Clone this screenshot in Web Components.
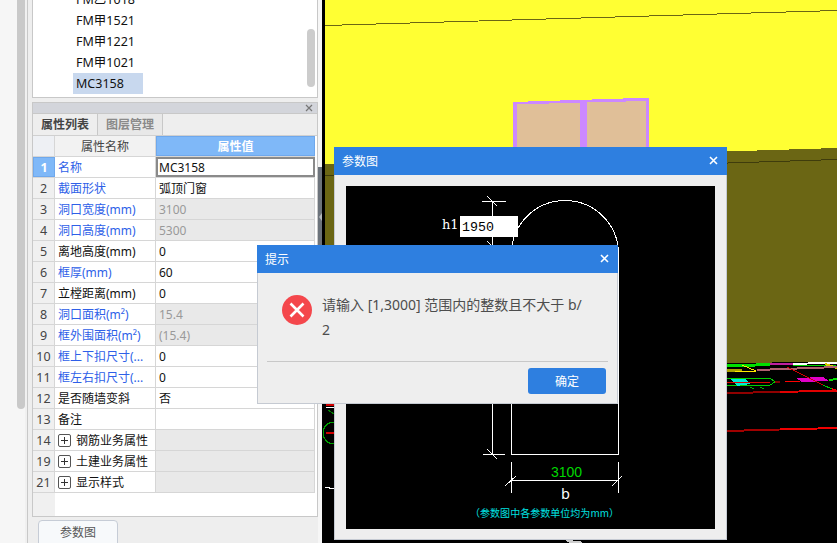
<!DOCTYPE html>
<html lang="zh">
<head>
<meta charset="utf-8">
<title>参数图</title>
<style>
  html, body { margin: 0; height: 100%; overflow: hidden; }
  body { font-family: "Noto Sans", "Noto Sans CJK SC", sans-serif; font-size: 12px; }
</style>
</head>
<body>
<app-shell>
  <side-bar slot="side">
    <type-list></type-list>
    <prop-panel></prop-panel>
  </side-bar>
  <scene-view slot="scene"></scene-view>
  <app-dialog title="参数图" style="left:334px;top:147px;width:393px;height:393px">
    <param-drawing></param-drawing>
  </app-dialog>
  <app-dialog title="提示" style="left:257px;top:245px;width:361px;height:159px">
    <tip-body></tip-body>
  </app-dialog>
</app-shell>

<script>
/**
 * Page frame: the sidebar, the scene and the floating windows.
 */
customElements.define('app-shell', class extends HTMLElement {
  constructor () {
    super()
    this.attachShadow({ mode: 'open' }).innerHTML = `
      <style>
        :host { display: flex; position: relative; width: 837px; height: 543px; overflow: hidden; background: #000; }
        .side { flex: 0 0 318px; }
        .scene { flex: 1; }
      </style>
      <div class="side"><slot name="side"></slot></div>
      <div class="scene"><slot name="scene"></slot></div>
      <slot></slot>
    `
  }
})

/**
 * Left column with the scrollbar strip and the two panels.
 */
customElements.define('side-bar', class extends HTMLElement {
  constructor () {
    super()
    this.attachShadow({ mode: 'open' }).innerHTML = `
      <style>
        :host { display: flex; height: 543px; background: #f6f6f6; }
        .track { flex: 0 0 17px; }
        .thumb { flex: 0 0 8px; height: 409px; background: #c9c9c9; border-radius: 0 0 4px 4px; }
        .gap { flex: 0 0 2px; background: #f0f0f0; }
        .main { flex: 1; display: flex; flex-direction: column; gap: 4px; padding-left: 4px; background: #eeeeee; border-left: 1px solid #c8c8c8; overflow: hidden; }
      </style>
      <div class="track"></div>
      <div class="thumb"></div>
      <div class="gap"></div>
      <div class="main"><slot></slot></div>
    `
  }
})

/**
 * The list of door types above the property table.
 */
customElements.define('type-list', class extends HTMLElement {
  constructor () {
    super()
    const items = ['FM乙1018', 'FM甲1521', 'FM甲1221', 'FM甲1021', 'MC3158']
    this.attachShadow({ mode: 'open' }).innerHTML = `
      <style>
        :host { display: block; flex: none; position: relative; height: 98px; box-sizing: border-box; background: #fff; border: 1px solid #c8c8c8; border-top: 0; overflow: hidden; color: #111; }
        ul { list-style: none; margin: -11px 0 0; padding: 0 0 0 40px; }
        li { width: 70px; height: 21px; line-height: 21px; padding-left: 3px; box-sizing: border-box; font-size: 12.5px; }
        li.sel { background: #c8d8ee; }
        .bar { position: absolute; right: 2px; top: 29px; width: 8px; height: 58px; border-radius: 4px; background: #cccccc; }
      </style>
      <ul>${items.map(t => `<li class="${t === 'MC3158' ? 'sel' : ''}">${t}</li>`).join('')}</ul>
      <div class="bar"></div>
    `
  }
})

/**
 * Property table with its tabs and the button below it.
 */
customElements.define('prop-panel', class extends HTMLElement {
  constructor () {
    super()
    const rows = [
      ['1', '名称', 'MC3158', 'blue', 'edit'],
      ['2', '截面形状', '弧顶门窗', 'blue', ''],
      ['3', '洞口宽度(mm)', '3100', 'blue', 'off'],
      ['4', '洞口高度(mm)', '5300', 'blue', 'off'],
      ['5', '离地高度(mm)', '0', '', ''],
      ['6', '框厚(mm)', '60', 'blue', ''],
      ['7', '立樘距离(mm)', '0', '', ''],
      ['8', '洞口面积(m²)', '15.4', 'blue', 'off'],
      ['9', '框外围面积(m²)', '(15.4)', 'blue', 'off'],
      ['10', '框上下扣尺寸(...', '0', 'blue', ''],
      ['11', '框左右扣尺寸(...', '0', 'blue', ''],
      ['12', '是否随墙变斜', '否', '', ''],
      ['13', '备注', '', '', ''],
      ['14', '钢筋业务属性', '', 'group', 'off'],
      ['19', '土建业务属性', '', 'group', 'off'],
      ['21', '显示样式', '', 'group', 'off']
    ]
    const rowHtml = rows.map(([n, name, value, kind, state], i) => `
      <div class="row">
        <div class="num ${i === 0 ? 'cur' : ''}">${n}</div>
        <div class="name ${kind === 'blue' ? 'link' : ''}">${kind === 'group' ? '<i class="plus"></i>' : ''}<span>${name}</span></div>
        <div class="val ${state}">${value}</div>
      </div>`).join('')
    this.attachShadow({ mode: 'open' }).innerHTML = `
      <style>
        :host { display: flex; flex-direction: column; flex: none; }
        .box { height: 415px; box-sizing: border-box; background: #fff; border: 1px solid #c8c8c8; display: flex; flex-direction: column; }
        .head { flex: 0 0 10px; background: #d3d5db; display: flex; justify-content: flex-end; align-items: center; padding-right: 4px; }
        .tabs { flex: 0 0 23px; display: flex; background: #eeeeee; border-top: 1px solid #c8c8c8; border-bottom: 1px solid #d0d0d0; box-sizing: border-box; }
        .tab { width: 64px; text-align: center; line-height: 21px; font-weight: 700; color: #444; border-right: 1px solid #c8c8c8; }
        .tab + .tab { color: #8a8a8a; background: #e8e8e8; }
        .grid { width: 282px; }
        .row, .top { display: grid; grid-template-columns: 22px 101px 159px; grid-template-rows: 20px; height: 21px; box-sizing: border-box; border-bottom: 1px solid #d6d6d6; line-height: 22px; }
        .row { color: #111; }
        .row > div, .top > div { overflow: hidden; }
        .num { background: #f0f0f0; text-align: center; border-right: 1px solid #d6d6d6; color: #444; font-size: 12.5px; }
        .num.cur { background: #7fb8f8; color: #fff; font-weight: 700; border: 1px solid #6fa8ec; line-height: 20px; box-sizing: border-box; }
        .name { padding: 2px 0 0 3px; box-sizing: border-box; border-right: 1px solid #d6d6d6; white-space: nowrap; display: flex; align-items: center; height: 20px; }
        .name.link { color: #2e5fe8; }
        .val { padding-left: 3px; border-right: 1px solid #d6d6d6; }
        .val.off { background: #e9e9e9; color: #999; }
        .val.edit { outline: 2px solid #8a8a8a; outline-offset: -2px; }
        .top { text-align: center; }
        .top div { background: #f2f2f2; color: #444; border-right: 1px solid #d6d6d6; }
        .top div:first-child { background: #eef0f4; }
        .top div:last-child { background: #7fb8f8; color: #fff; font-weight: 700; border: 1px solid #6fa8ec; line-height: 20px; box-sizing: border-box; }
        .plus { flex: 0 0 11px; height: 11px; margin: -2px 5px 0 0; border: 1px solid #555; border-radius: 2px; position: relative; }
        .plus::before, .plus::after { content: ''; position: absolute; background: #333; }
        .plus::before { left: 2px; right: 2px; top: 5px; height: 1px; }
        .plus::after { top: 2px; bottom: 2px; left: 5px; width: 1px; }
        .rest { flex: 1; width: 22px; background: #f0f0f0; }
        button { align-self: flex-start; margin: 3px 0 0 6px; width: 80px; height: 28px; background: #f7f9fb; border: 1px solid #c6ccd6; border-radius: 4px; font: inherit; color: #555; padding: 0 0 4px; }
      </style>
      <div class="box">
        <div class="head"><svg width="8" height="8" viewBox="0 0 8 8"><path d="M1 1 L7 7 M7 1 L1 7" stroke="#777" stroke-width="1.2"/></svg></div>
        <div class="tabs"><div class="tab">属性列表</div><div class="tab">图层管理</div></div>
        <div class="grid">
          <div class="top"><div></div><div>属性名称</div><div>属性值</div></div>
          ${rowHtml}
        </div>
        <div class="rest"></div>
      </div>
      <button type="button">参数图</button>
    `
  }
})

/**
 * The 3D view behind the windows, with the splitter on its left side.
 * Its shapes sit on a free canvas, the coordinates are those of the page.
 */
customElements.define('scene-view', class extends HTMLElement {
  constructor () {
    super()
    this.attachShadow({ mode: 'open' }).innerHTML = `
      <style>
        :host { display: flex; height: 543px; background: #000; }
        .split { flex: 0 0 4px; background: linear-gradient(#f6f6f6 167px, #6c737b 167px, #6c737b 300px, #f6f6f6 300px); position: relative; }
        .split::after { content: ''; position: absolute; left: 1px; top: 213px; border: 4px solid transparent; border-left: 0; border-right: 3px solid #b4b8bd; }
        svg { display: block; flex: none; }
      </style>
      <div class="split"></div>
      <svg width="515" height="543" viewBox="322 0 515 543" shape-rendering="crispEdges" fill="none">
        <polygon points="325,0 837,0 837,148 325,164" fill="#ffff33"/>
        <polygon points="325,164 837,148 837,362 325,366" fill="#6b6614"/>
        <path d="M325 25.5 L837 10.5" stroke="#6b6614"/>
        <path d="M325 176 L837 159.5" stroke="#3f3c0c"/>

        <polygon points="512.5,102 649,97.7 649,150 512.5,150" fill="#cc88ff"/>
        <polygon points="517,104 580,103 580,150 517,150" fill="#e0bf98"/>
        <polygon points="587,102.5 646,101 646,150 587,150" fill="#e0bf98"/>

        <path d="M727 366 L770 364.5" stroke="#00e000" stroke-width="3"/>
        <path d="M770 364.5 L793 364" stroke="#c020a0" stroke-width="2"/>
        <path d="M793 364 L837 362.5" stroke="#ffffff" stroke-width="2"/>
        <path d="M793 366 L837 365" stroke="#00d000"/>
        <path d="M727 371 L742 370.5" stroke="#a8a000" stroke-width="3"/>
        <path d="M735 371 L756 371 L742 365" stroke="#ffe800" stroke-width="1"/>
        <path d="M825 364 L837 368" stroke="#d8c800" stroke-width="2"/>
        <path d="M757 370 L837 367" stroke="#b06070" stroke-width="2"/>
        <path d="M727 378 L770 378 L775 382 L770 385 L727 385" stroke="#00d000"/>
        <polygon points="730,379 745,379 750,384 737,386" fill="#00e8d8"/>
        <path d="M727 382 L770 382" stroke="#e00000"/>
        <path d="M775 382 L780 382" stroke="#800000" stroke-width="2"/>
        <path d="M785 381 L800 381" stroke="#ff0000"/>
        <path d="M750 387 L754 389 M760 387 L764 389" stroke="#00b000"/>
        <polygon points="796,378 823,377 829,381 802,382" fill="#e000c8"/>
        <path d="M829 380 L837 379" stroke="#00e000" stroke-width="2"/>
        <path d="M787 367 L823 385" stroke="#d00000"/>
        <path d="M823 385 L832 389" stroke="#00c000"/>
        <path d="M832 389 L837 391" stroke="#ff0000" stroke-width="2"/>
        <path d="M727 393 L780 392" stroke="#900000" stroke-width="2"/>
        <path d="M780 392 L837 390.5" stroke="#e00000" stroke-width="2"/>
        <path d="M727 431 L780 429.5" stroke="#a00000" stroke-width="2"/>
        <path d="M780 429.5 L837 428" stroke="#f00000" stroke-width="2"/>

        <path d="M326 407 L334 407" stroke="#fff"/>
        <path d="M326 405 L334 405" stroke="#d00000" stroke-width="2"/>
        <path d="M328 410 L334 414" stroke="#008000"/>
        <path d="M334 422 A11 11 0 0 0 334 444" stroke="#00a000"/>
        <path d="M326 433 L334 433" stroke="#d00000" stroke-width="2"/>
        <path d="M325 487 L334 489" stroke="#fff"/>
        <polygon points="565,540 580,541 582,543 570,543" fill="#ccc"/>
      </svg>
    `
  }
})

/**
 * Floating window with a blue title bar.
 */
customElements.define('app-dialog', class extends HTMLElement {
  constructor () {
    super()
    this.attachShadow({ mode: 'open' }).innerHTML = `
      <style>
        :host { display: flex; flex-direction: column; position: absolute; box-sizing: border-box; background: #eeeeee; border: 1px solid #c5cad2; border-top: 0; }
        header { flex: 0 0 27px; margin: 0 -1px; background: #2e7fe0; color: #fff; display: flex; align-items: center; justify-content: space-between; padding: 0 9px 1px 8px; }
        svg { display: block; }
        .body { flex: 1; min-height: 0; }
      </style>
      <header><span id="t"></span>
        <svg width="9" height="9" viewBox="0 0 9 9"><path d="M1 1 L8 8 M8 1 L1 8" stroke="#fff" stroke-width="1.6"/></svg>
      </header>
      <div class="body"><slot></slot></div>
    `
    this.shadowRoot.querySelector('#t').textContent = this.getAttribute('title')
  }
})

/**
 * CAD style drawing shown in the parameter window.
 */
customElements.define('param-drawing', class extends HTMLElement {
  constructor () {
    super()
    this.attachShadow({ mode: 'open' }).innerHTML = `
      <style>
        :host { display: block; padding: 11px; height: 100%; box-sizing: border-box; }
        svg { display: block; background: #000; }
      </style>
      <svg width="369" height="343" viewBox="346 185 369 343" shape-rendering="crispEdges">
        <g fill="none" stroke="#fff" stroke-width="1">
          <path d="M511.5 453.5 V253 A53.5 53.5 0 0 1 618.5 253 V453.5 Z"/>
          <path d="M492.5 200 V453.5 M482 200.5 H506 M487 195 L497 205 M487 240 L497 250 M483 453.5 H505 M487 448 L497 458"/>
          <path d="M511.5 461 V492 M618.5 461 V492 M511.5 479.5 H618.5 M505 485 L516 475 M612 485 L622 475"/>
        </g>
        <rect x="460" y="215" width="58" height="21" fill="#fff"/>
        <text x="442" y="228" fill="#fff" font-size="13" style="font-family:'DejaVu Serif',serif">h1</text>
        <text x="462" y="230" fill="#000" font-size="13.3" style="font-family:'Liberation Mono',monospace">1950</text>
        <text x="551" y="476" fill="#00d800" font-size="14" textLength="31" style="font-family:'Liberation Sans',sans-serif">3100</text>
        <text x="561" y="498" fill="#fff" font-size="14" style="font-family:'DejaVu Sans',sans-serif">b</text>
        <text x="470" y="516" fill="#00e0e0" font-size="10" textLength="149" style="font-family:'Noto Sans CJK SC',sans-serif">（参数图中各参数单位均为mm）</text>
      </svg>
    `
  }
})

/**
 * Message, divider and confirm button of the hint window.
 */
customElements.define('tip-body', class extends HTMLElement {
  constructor () {
    super()
    this.attachShadow({ mode: 'open' }).innerHTML = `
      <style>
        :host { display: flex; flex-direction: column; height: 100%; box-sizing: border-box; padding: 0 9px 9px; color: #4d4d4d; }
        .msg { flex: 1; display: flex; gap: 10px; padding: 22px 0 0 15px; border-bottom: 1px solid #c8c8c8; }
        .msg svg { flex: none; }
        .msg p { margin: -3px 0 0; font-size: 14px; line-height: 25px; }
        .foot { display: flex; justify-content: flex-end; padding: 6px 2px 0 0; }
        button { width: 78px; height: 26px; border: 0; border-radius: 3px; background: #2e7fe0; color: #fff; font: inherit; padding: 0; }
      </style>
      <div class="msg">
        <svg width="30" height="30" viewBox="0 0 30 30"><circle cx="15" cy="15" r="15" fill="#f4474c"/><path d="M8.5 8.5 L21.5 21.5 M21.5 8.5 L8.5 21.5" stroke="#fff" stroke-width="2.6"/></svg>
        <p>请输入 [1,3000] 范围内的整数且不大于 b/<br>2</p>
      </div>
      <div class="foot"><button type="button">确定</button></div>
    `
  }
})
</script>
</body>
</html>
